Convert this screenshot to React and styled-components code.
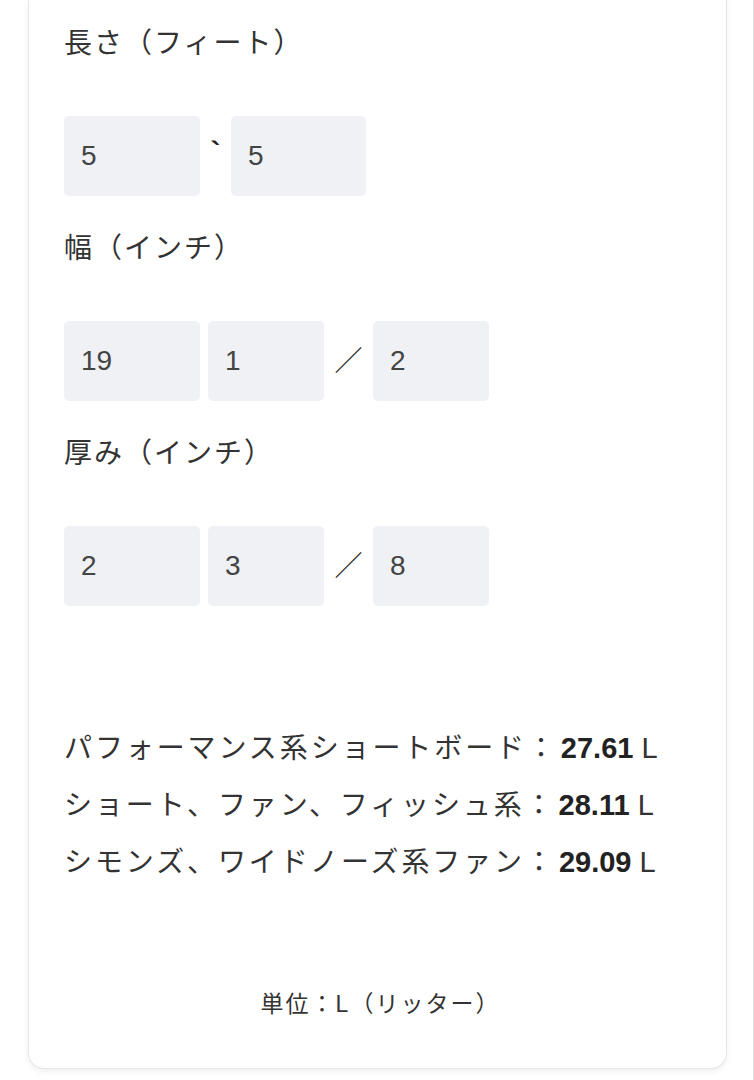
import React from "react";
import styled, { createGlobalStyle } from "styled-components";

const GlobalStyle = createGlobalStyle`
  html, body {
    margin: 0;
    padding: 0;
    background: #ffffff;
  }
  body {
    font-family: "Liberation Sans", "Noto Sans CJK JP", sans-serif;
    color: #333333;
  }
`;

const dims = [
  {
    label: "長さ（フィート）",
    fields: [
      { value: "5", width: 136 },
      { sep: "`", sepWidth: 31 },
      { value: "5", width: 135 },
    ],
  },
  {
    label: "幅（インチ）",
    fields: [
      { value: "19", width: 136 },
      { gap: 8 },
      { value: "1", width: 116 },
      { sep: "／", sepWidth: 49 },
      { value: "2", width: 116 },
    ],
  },
  {
    label: "厚み（インチ）",
    fields: [
      { value: "2", width: 136 },
      { gap: 8 },
      { value: "3", width: 116 },
      { sep: "／", sepWidth: 49 },
      { value: "8", width: 116 },
    ],
  },
];

const results = [
  { name: "パフォーマンス系ショートボード：", value: "27.61" },
  { name: "ショート、ファン、フィッシュ系：", value: "28.11" },
  { name: "シモンズ、ワイドノーズ系ファン：", value: "29.09" },
];

function App() {
  return (
    <Page>
      <GlobalStyle />
      <Card>
        {dims.map((d) => (
          <Section key={d.label}>
            <Label>{d.label}</Label>
            <InputRow>
              {d.fields.map((f, i) => {
                if (f.gap) return <Spacer key={i} $w={f.gap} />;
                if (f.sep)
                  return (
                    <Sep key={i} $w={f.sepWidth} $tick={f.sep === "`"}>
                      {f.sep}
                    </Sep>
                  );
                return (
                  <Field key={i} $w={f.width}>
                    {f.value}
                  </Field>
                );
              })}
            </InputRow>
          </Section>
        ))}

        <Results>
          {results.map((r) => (
            <ResultLine key={r.name}>
              <span className="name">{r.name}</span>
              <strong>{r.value}</strong>
              <span className="unit"> L</span>
            </ResultLine>
          ))}
        </Results>

        <Note>単位：L（リッター）</Note>
      </Card>
    </Page>
  );
}

const Page = styled.div`
  box-sizing: border-box;
  width: 754px;
  min-height: 1080px;
  padding: 0 27px 12px 28px;
  border-right: 1px solid #dedede;
`;

const Card = styled.div`
  box-sizing: border-box;
  width: 699px;
  padding: 21px 36px 44px;
  background: #ffffff;
  border: 1px solid #e6e6e6;
  border-top: none;
  border-radius: 0 0 16px 16px;
  box-shadow: 0 3px 6px rgba(0, 0, 0, 0.06);
`;

const Section = styled.div`
  display: flex;
  flex-direction: column;
  gap: 55px;
  margin-bottom: 30px;
  margin-left: -1px;
`;

const Label = styled.div`
  height: 40px;
  line-height: 40px;
  font-size: 28px;
  letter-spacing: 2px;
  color: #333333;
  font-family: "Noto Sans CJK JP", sans-serif;
  font-weight: 400;
`;

const InputRow = styled.div`
  display: flex;
  align-items: stretch;
  height: 80px;
`;

const Field = styled.div`
  box-sizing: border-box;
  width: ${(p) => p.$w}px;
  height: 80px;
  padding-left: 17px;
  display: flex;
  align-items: center;
  background: #eff1f5;
  border-radius: 5px;
  font-size: 28px;
  color: #444444;
`;

const Spacer = styled.div`
  width: ${(p) => p.$w}px;
`;

const Sep = styled.div`
  width: ${(p) => p.$w}px;
  display: flex;
  justify-content: center;
  align-items: ${(p) => (p.$tick ? "flex-start" : "center")};
  padding-top: ${(p) => (p.$tick ? "19px" : "0")};
  font-size: ${(p) => (p.$tick ? "30px" : "28px")};
  font-weight: ${(p) => (p.$tick ? 700 : 400)};
  font-family: ${(p) =>
    p.$tick ? '"Liberation Sans", sans-serif' : '"Noto Sans CJK JP", sans-serif'};
  color: #222222;
  margin-top: ${(p) => (p.$tick ? "0" : "-4px")};
`;

const Results = styled.div`
  padding-top: 82px;
  margin-left: -1px;
`;

const ResultLine = styled.div`
  height: 57px;
  line-height: 57px;
  font-size: 28px;
  white-space: pre;
  color: #333333;

  .name {
    font-family: "Noto Sans CJK JP", sans-serif;
    letter-spacing: 2.9px;
    margin-right: 3px;
  }

  strong {
    font-family: "Liberation Sans", sans-serif;
    font-size: 29px;
    font-weight: 700;
    color: #222222;
  }

  .unit {
    font-family: "Liberation Sans", sans-serif;
    font-size: 29px;
    color: #333333;
  }
`;

const Note = styled.div`
  margin-top: 95px;
  height: 40px;
  line-height: 40px;
  text-align: center;
  font-size: 23px;
  letter-spacing: 2px;
  color: #333333;
  padding-left: 6px;
`;

export default App;
